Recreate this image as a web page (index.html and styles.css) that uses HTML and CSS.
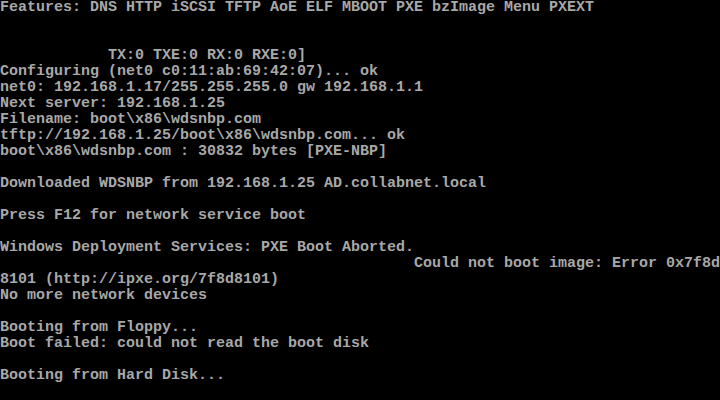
FILE: index.html
```html
<!DOCTYPE html>
<html>
<head>
<meta charset="utf-8">
<link rel="stylesheet" href="styles.css">
</head>
<body>
<pre class="console">Features: DNS HTTP iSCSI TFTP AoE ELF MBOOT PXE bzImage Menu PXEXT


            TX:0 TXE:0 RX:0 RXE:0]
Configuring (net0 c0:11:ab:69:42:07)... ok
net0: 192.168.1.17/255.255.255.0 gw 192.168.1.1
Next server: 192.168.1.25
Filename: boot\x86\wdsnbp.com
tftp://192.168.1.25/boot\x86\wdsnbp.com... ok
boot\x86\wdsnbp.com : 30832 bytes [PXE-NBP]

Downloaded WDSNBP from 192.168.1.25 AD.collabnet.local

Press F12 for network service boot

Windows Deployment Services: PXE Boot Aborted.
                                              Could not boot image: Error 0x7f8d
8101 (http://ipxe.org/7f8d8101)
No more network devices

Booting from Floppy...
Boot failed: could not read the boot disk

Booting from Hard Disk...
</pre>
</body>
</html>
```
FILE: styles.css
```css
html, body {
  margin: 0;
  padding: 0;
  background: #000;
  width: 720px;
  height: 400px;
  overflow: hidden;
}

.console {
  margin: 0;
  padding: 0;
  font-family: "Liberation Mono", "DejaVu Sans Mono", monospace;
  font-size: 15px;
  font-weight: bold;
  line-height: 16px;
  color: #a8a8a8;
  white-space: pre;
}
```
